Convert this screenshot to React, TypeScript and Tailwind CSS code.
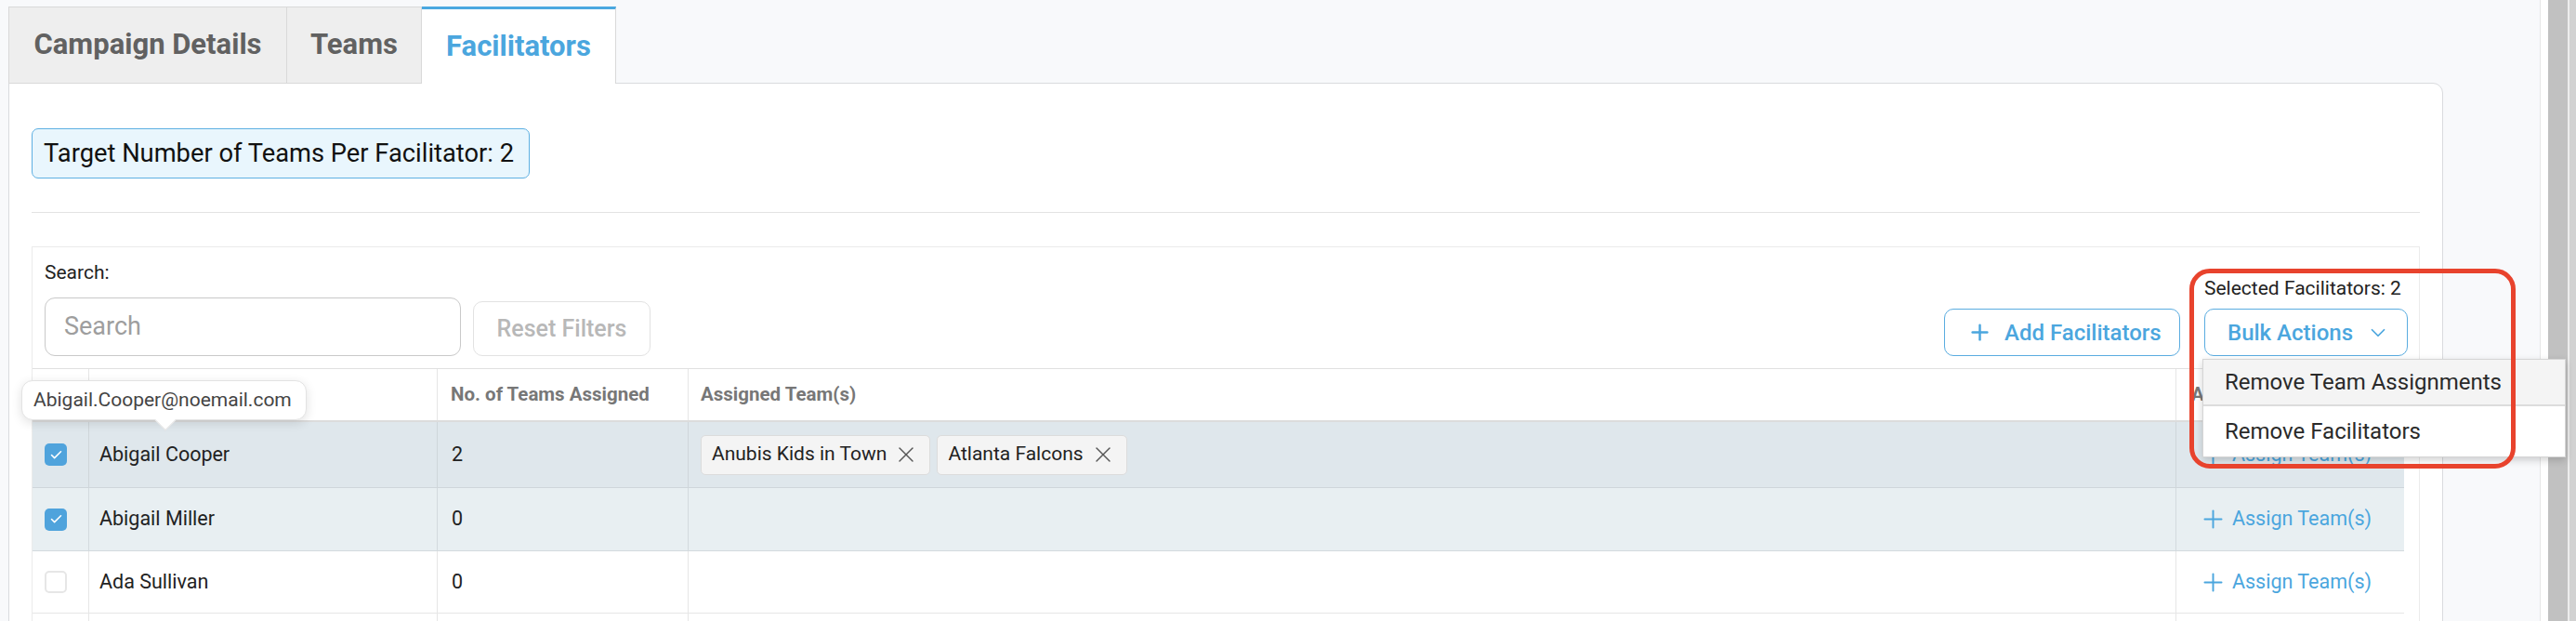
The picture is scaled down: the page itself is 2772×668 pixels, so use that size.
import { Plus, ChevronDown, X, Check } from "lucide-react";

type Row = {
  name: string;
  count: number | null;
  teams: string[];
  checked: boolean;
  bg: string;
  line: string;
  h: string;
};

const rows: Row[] = [
  {
    name: "Abigail Cooper",
    count: 2,
    teams: ["Anubis Kids in Town", "Atlanta Falcons"],
    checked: true,
    bg: "bg-[#dfe7ec]",
    line: "border-[#cfd6da]",
    h: "h-[71px]",
  },
  {
    name: "Abigail Miller",
    count: 0,
    teams: [],
    checked: true,
    bg: "bg-[#e8eff2]",
    line: "border-[#d3dade]",
    h: "h-[68px]",
  },
  {
    name: "Ada Sullivan",
    count: 0,
    teams: [],
    checked: false,
    bg: "bg-white",
    line: "border-[#e6e6e6]",
    h: "h-[67px]",
  },
];

function Checkbox({ checked }: { checked: boolean }) {
  if (checked) {
    return (
      <span className="flex h-[24px] w-[24px] items-center justify-center rounded-[5px] bg-[#4fa3dc]">
        <Check className="h-[15px] w-[15px] text-white" strokeWidth={2.5} />
      </span>
    );
  }
  return <span className="block h-[24px] w-[24px] rounded-[5px] border-2 border-[#e6e6e6] bg-white" />;
}

function TableRow({ row }: { row: Row }) {
  return (
    <div className={`flex w-[2552px] border-b ${row.line} ${row.bg} ${row.h} text-[21.5px] text-[#222]`}>
      <div className="flex w-[60px] items-center pl-[13px]">
        <Checkbox checked={row.checked} />
      </div>
      <div className={`flex w-[375px] items-center border-l ${row.line} pl-[11px]`}>{row.name}</div>
      <div className={`flex w-[270px] items-center border-l ${row.line} pl-[15px]`}>{row.count}</div>
      <div className={`flex w-[1601px] items-center gap-[7px] border-l ${row.line} pl-[13px]`}>
        {row.teams.map((t) => (
          <span
            key={t}
            className="flex h-[43px] items-center gap-[7px] rounded-[5px] border border-[#dcdcdc] bg-[#f4f4f4] pl-[11px] pr-[11px] text-[21px] text-[#222]"
          >
            {t}
            <X className="h-[28px] w-[28px] text-[#555]" strokeWidth={1.2} />
          </span>
        ))}
      </div>
      <div className={`flex w-[246px] items-center gap-[5px] border-l ${row.line} pl-[24px] text-[#4ba6de]`}>
        <Plus className="h-[31px] w-[31px]" strokeWidth={1.5} />
        <span>Assign Team(s)</span>
      </div>
    </div>
  );
}

export default function App() {
  return (
    <div className="flex h-screen w-full overflow-hidden bg-[#f8f9fb] font-['Roboto',sans-serif]">
      <div className="w-[2733px] shrink-0 pl-[9px] pt-[7px]">
        <div className="w-[2620px]">
          {/* Tabs */}
          <div className="relative z-10 -mb-px flex h-[83px]">
            <div className="flex w-[300px] items-center justify-center border-x border-y border-[#d9d9d9] bg-[#eeeeee] text-[31px] font-bold text-[#616161]">
              Campaign Details
            </div>
            <div className="flex w-[145px] items-center justify-center border-y border-r border-[#d9d9d9] bg-[#eeeeee] text-[31px] font-bold text-[#616161]">
              Teams
            </div>
            <div className="flex w-[209px] items-center justify-center border-r border-t-[3px] border-r-[#d9d9d9] border-t-[#4aa8e0] bg-white text-[31px] font-bold text-[#4ba6de]">
              Facilitators
            </div>
          </div>

          {/* Card */}
          <div className="rounded-tr-[11px] border border-[#d9dbde] bg-white px-[24px] pt-[48px] pb-[40px]">
            <div className="flex h-[54px] w-[536px] items-center whitespace-nowrap rounded-[7px] border border-[#5eb0e2] bg-[#e9f6fd] px-[12px] text-[27.3px] text-[#111]">
              Target Number of Teams Per Facilitator: 2
            </div>

            <div className="mt-[36px] h-px bg-[#e3e3e3]" />

            <div className="relative mt-[36px] border border-[#ebebeb]">
              {/* Filters */}
              <div className="flex items-end justify-between border-b border-[#e0e0e0] pt-[15px] pr-[12px] pb-[13px] pl-[13px]">
                <div>
                  <div className="h-[24px] text-[21px] leading-[24px] text-[#222]">Search:</div>
                  <div className="mt-[15px] flex items-end gap-[13px]">
                    <div className="flex h-[63px] w-[448px] items-center rounded-[11px] border border-[#c9c9c9] pl-[20px] text-[27px] text-[#9e9e9e]">
                      Search
                    </div>
                    <div className="flex h-[59px] w-[191px] items-center justify-center rounded-[10px] border border-[#e2e2e2] text-[25px] font-medium text-[#b8b8b8]">
                      Reset Filters
                    </div>
                  </div>
                </div>
                <div className="flex items-end gap-[26px]">
                  <div className="flex h-[51px] w-[254px] items-center gap-[13px] rounded-[10px] border border-[#5aace0] pl-[24px] text-[24px] font-medium text-[#4ba6de]">
                    <Plus className="h-[27px] w-[27px]" strokeWidth={2.2} />
                    <span>Add Facilitators</span>
                  </div>
                  <div>
                    <div className="mb-[10px] h-[24px] text-[21px] leading-[24px] text-[#222]">
                      Selected Facilitators: 2
                    </div>
                    <div className="flex h-[51px] w-[219px] items-center gap-[14px] rounded-[10px] border border-[#5aace0] pl-[24px] text-[24px] font-medium text-[#4ba6de]">
                      <span>Bulk Actions</span>
                      <ChevronDown className="h-[26px] w-[26px]" strokeWidth={1.6} />
                    </div>
                  </div>
                </div>
              </div>

              {/* Header */}
              <div className="flex h-[57px] w-[2552px] border-b-2 border-[#dcdcdc] text-[20.5px] font-bold text-[#777]">
                <div className="w-[60px]" />
                <div className="w-[375px] border-l border-[#e6e6e6]" />
                <div className="flex w-[270px] items-center border-l border-[#e6e6e6] pl-[14px]">
                  No. of Teams Assigned
                </div>
                <div className="flex w-[1601px] items-center border-l border-[#e6e6e6] pl-[13px]">
                  Assigned Team(s)
                </div>
                <div className="flex w-[246px] items-center border-l border-[#e6e6e6] pl-[16px]">Actions</div>
              </div>

              {rows.map((r) => (
                <TableRow key={r.name} row={r} />
              ))}

              {/* next row, cut off by the window */}
              <div className="flex h-[67px] w-[2552px] bg-white">
                <div className="w-[60px]" />
                <div className="w-[375px] border-l border-[#e6e6e6]" />
                <div className="w-[270px] border-l border-[#e6e6e6]" />
                <div className="w-[1601px] border-l border-[#e6e6e6]" />
                <div className="w-[246px] border-l border-[#e6e6e6]" />
              </div>

              {/* Email tooltip */}
              <div className="absolute top-[143px] left-[-12px] z-20 flex h-[43px] w-[307px] items-center rounded-[12px] border border-[#e3e3e3] bg-white pl-[12px] text-[21px] text-[#444] shadow-[0_3px_12px_rgba(0,0,0,0.12)]">
                Abigail.Cooper@noemail.com
                <span className="absolute bottom-[-9px] left-[146px] h-[16px] w-[16px] rotate-45 border-r border-b border-[#e3e3e3] bg-white" />
              </div>

              {/* Bulk actions menu */}
              <div className="absolute top-[120px] left-[2335px] z-20 w-[391px] border border-[#d5d5d5] bg-white text-[24px] text-[#2a2a2a] shadow-[0_3px_8px_rgba(0,0,0,0.18)]">
                <div className="flex h-[50px] items-center border-b-2 border-[#dcdcdc] bg-[#f4f4f4] pl-[23px]">
                  Remove Team Assignments
                </div>
                <div className="flex h-[54px] items-center pl-[23px]">Remove Facilitators</div>
              </div>

              {/* Annotation */}
              <div className="pointer-events-none absolute top-[23px] left-[2321px] z-30 h-[215px] w-[351px] rounded-[22px] border-[5px] border-[#e8432d]" />
            </div>
          </div>
        </div>
      </div>

      {/* Scrollbar */}
      <div className="flex flex-1 border-l border-[#e6e6e6]">
        <div className="w-[8px] bg-white" />
        <div className="w-[21px] bg-[#c1c1c1]" />
        <div className="w-[2px] bg-[#ececec]" />
        <div className="flex-1 bg-[#d2d2d2]" />
      </div>
    </div>
  );
}
